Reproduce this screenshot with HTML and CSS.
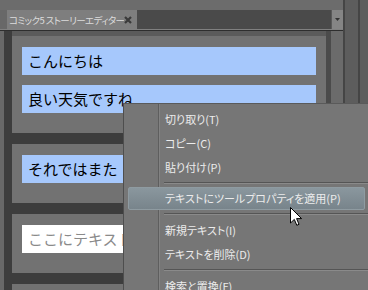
FILE: index.html
```html
<!DOCTYPE html>
<html lang="ja">
<head>
  <meta charset="UTF-8">
  <title>ストーリーエディター</title>
  <link rel="stylesheet" href="styles.css">
</head>
<body>
<div class="screen">
  <div class="main">
    <div class="top-strip"></div>
    <div class="tabbar">
      <div class="tab-gap"></div>
      <div class="tab">
        <span class="tab-title">コミック5 ストーリーエディター</span>
        <svg class="tab-close" width="8" height="8" viewBox="0 0 8 8">
          <path d="M1 1 L7 7 M7 1 L1 7" stroke="#3a3a3a" stroke-width="2.2"/>
        </svg>
      </div>
      <div class="tab-fill"></div>
      <div class="tab-menu-btn">
        <svg width="5" height="3" viewBox="0 0 5 3"><path d="M0 0 H5 L2.5 3 Z" fill="#333"/></svg>
      </div>
    </div>
    <div class="tabbar-line"></div>

    <div class="editor">
      <div class="pages">
        <div class="pages-top"></div>
        <div class="page">
          <div class="text-box">こんにちは</div>
          <div class="text-box">良い天気ですね</div>
        </div>
        <div class="page">
          <div class="text-box">それではまた</div>
        </div>
        <div class="page">
          <div class="text-box empty">ここにテキストを入力</div>
        </div>
        <div class="page">
          <div class="text-box empty"></div>
        </div>
      </div>
      <div class="scroll"></div>
    </div>
  </div>

  <div class="side">
    <div class="side-col wide"></div>
    <div class="side-col"></div>
  </div>

  <!-- right-click menu -->
  <div class="context-menu">
    <div class="menu-item">切り取り(T)</div>
    <div class="menu-item">コピー(C)</div>
    <div class="menu-item">貼り付け(P)</div>
    <div class="menu-sep"></div>
    <div class="menu-item active">テキストにツールプロパティを適用(P)</div>
    <div class="menu-sep"></div>
    <div class="menu-item">新規テキスト(I)</div>
    <div class="menu-item">テキストを削除(D)</div>
    <div class="menu-sep"></div>
    <div class="menu-item">検索と置換(F)</div>
  </div>

  <svg class="cursor" width="13" height="20" viewBox="0 0 13 20">
    <path d="M0.5 0.5 L0.5 16 L4.3 12.4 L6.8 18.3 L9 17.3 L6.6 11.6 L11.6 11.6 Z" fill="#fff" stroke="#000" stroke-width="1"/>
  </svg>
</div>
</body>
</html>
```

FILE: styles.css
```css
body {
  margin: 0;
  background: #6a6a6a;
  font-family: "Noto Sans CJK JP", "Noto Sans", sans-serif;
}

.screen {
  position: relative;
  width: 368px;
  height: 290px;
  overflow: hidden;
  display: flex;
}

.main {
  width: 343px;
  display: flex;
  flex-direction: column;
}

.top-strip {
  flex: 0 0 10px;
  background: #6c6c6c;
}

.tabbar {
  flex: 0 0 19px;
  display: flex;
}
.tab-gap {
  width: 7px;
  background: #686868;
}
.tab {
  width: 130px;
  flex-shrink: 0;
  background: #7e7e7e;
  display: flex;
  align-items: center;
  padding-left: 2px;
  box-sizing: border-box;
}
.tab-title {
  min-width: 0;
  overflow: hidden;
  font-size: 9.5px;
  color: #dcdcdc;
  letter-spacing: -0.6px;
  font-feature-settings: "palt";
  white-space: pre;
}
.tab-close {
  flex-shrink: 0;
  margin-left: auto;
  margin-right: 5px;
}
.tab-fill {
  flex: 1;
  background: #4a4a4a;
}
.tab-menu-btn {
  width: 12px;
  background: #858585;
  border-left: 1px solid #5a5a5a;
  box-sizing: border-box;
  display: flex;
  justify-content: center;
  padding-top: 8px;
}

.tabbar-line {
  flex: 0 0 1px;
  background: #808080;
  border-bottom: 1px solid #2e2e2e;
}

.editor {
  flex: 1;
  min-height: 0;
  overflow: hidden;
  display: flex;
  background: #3d3d3d;
  border-left: 4px solid #686868;
  padding-left: 8px;
}

.pages {
  width: 314px;
  flex-shrink: 0;
  display: flex;
  flex-direction: column;
  gap: 11px;
}
.pages-top {
  flex: 0 0 5px;
  margin-bottom: -11px;
  background: #5b5b5b;
}
.page {
  flex-shrink: 0;
  background: #727272;
  padding: 11px 10px 20px;
  display: flex;
  flex-direction: column;
  gap: 10px;
}
.text-box {
  height: 28px;
  background: #a6c8fc;
  color: #000;
  font-size: 15px;
  line-height: 28px;
  padding-left: 6px;
  white-space: nowrap;
  overflow: hidden;
}
.text-box.empty {
  background: #fff;
  color: #8a8a8a;
}

.scroll {
  width: 12px;
  background: #6b6b6b;
  border-left: 5px solid #4b4b4b;
}

.side {
  flex: 1;
  display: flex;
  background: #454545;
  gap: 2px;
  padding-left: 2px;
}
.side-col {
  flex: 1;
  background: #5d5d5d;
}
.side-col.wide {
  flex: 0 0 13px;
}

.context-menu {
  position: absolute;
  left: 123px;
  top: 103px;
  width: 248px;
  height: 200px;
  background: #767676;
  border-left: 1px solid #4e4e4e;
  border-top: 1px solid #5a5a5a;
  padding-top: 3px;
  box-sizing: border-box;
}
.context-menu::before {
  content: "";
  position: absolute;
  left: 34px;
  top: 0;
  bottom: 0;
  width: 1px;
  background: #5e5e5e;
  border-right: 1px solid #828282;
}
.menu-item {
  position: relative;
  height: 24px;
  line-height: 24px;
  padding-left: 41px;
  font-size: 11px;
  color: #ececec;
  font-feature-settings: "palt";
  white-space: nowrap;
}
.menu-item.active {
  height: 23px;
  line-height: 21px;
  margin: 0 6px 0 4px;
  padding-left: 36px;
  border: 1px solid #8f9ba1;
  border-radius: 2px;
  background: linear-gradient(#8a979e, #78848b);
  box-sizing: border-box;
}
.menu-sep {
  position: relative;
  height: 8px;
  margin-left: 40px;
}
.menu-sep::after {
  content: "";
  position: absolute;
  left: 0;
  right: 0;
  top: 3px;
  height: 1px;
  background: #555;
  border-bottom: 1px solid #8a8a8a;
}

.cursor {
  position: absolute;
  left: 290px;
  top: 207px;
}
```
